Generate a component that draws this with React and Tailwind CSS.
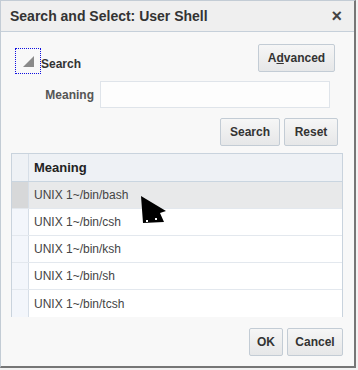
const rows = [
  "UNIX 1~/bin/bash",
  "UNIX 1~/bin/csh",
  "UNIX 1~/bin/ksh",
  "UNIX 1~/bin/sh",
  "UNIX 1~/bin/tcsh",
];

const btn =
  "h-[28px] flex items-center justify-center rounded-[2px] border border-[#c3ccd5] bg-gradient-to-b from-[#f6f6f6] to-[#e6e7e8] text-[12px] font-bold text-[#333]";

const App = () => {
  return (
    <div className="w-[358px] h-[370px] bg-[#f2f2f2] font-['Liberation_Sans',Arial,sans-serif]">
      <div className="relative w-[356px] h-[368px] flex flex-col bg-[#f8f8f8] border-l border-t border-[#c3ccd5] border-r-2 border-b-2 border-r-[#767676] border-b-[#767676]">
        {/* Title bar */}
        <div className="h-[31px] shrink-0 flex items-center justify-between pl-[9px] pr-[12px] bg-[#efefef] border-b border-[#c6d0da]">
          <span className="text-[14px] font-bold text-[#333]">Search and Select: User Shell</span>
          <span className="text-[18px] font-bold text-[#444] leading-none">×</span>
        </div>

        {/* Search header + Advanced */}
        <div className="h-[49px] shrink-0 flex items-start">
          <div className="ml-[14px] mt-[16px] w-[26px] h-[26px] border border-dotted border-[#1010e0] flex items-center justify-center">
            <svg width="11" height="11" viewBox="0 0 11 11">
              <polygon points="11,0 11,11 0,11" fill="#8a8a8a" />
            </svg>
          </div>
          <span className="mt-[23px] text-[12px] font-bold text-[#333]">Search</span>
          <button className={`${btn} ml-auto mr-[19px] mt-[12px] w-[77px]`}>
            A<span className="underline">d</span>vanced
          </button>
        </div>

        {/* Meaning field */}
        <div className="h-[27px] shrink-0 flex items-center">
          <span className="w-[93px] text-right text-[12px] font-bold text-[#555]">Meaning</span>
          <div className="ml-[6px] w-[230px] h-[27px] bg-[#fdfdfd] border border-[#dfe4ea]" />
        </div>

        {/* Search / Reset */}
        <div className="mt-[10px] shrink-0 flex justify-end gap-[4px] pr-[16px]">
          <button className={`${btn} w-[60px]`}>Search</button>
          <button className={`${btn} w-[54px]`}>Reset</button>
        </div>

        {/* Results table */}
        <div className="mt-[7px] ml-[10px] w-[332px] h-[164px] shrink-0 border border-[#c9d3dd] bg-white flex flex-col">
          <div className="h-[28px] shrink-0 flex bg-[#eef1f5] border-b border-[#c9d5e0]">
            <div className="w-[17px] border-r border-[#d6dee7]" />
            <div className="flex-1 flex items-center pl-[5px] text-[13px] font-bold text-[#222]">Meaning</div>
          </div>
          {rows.map((r, i) => (
            <div
              key={r}
              className={`h-[27px] shrink-0 flex ${i < rows.length - 1 ? "border-b border-[#e3e8ee]" : ""} ${i === 0 ? "bg-[#e8e9ea]" : "bg-white"}`}
            >
              <div className={`w-[17px] border-r border-[#d6dee7] ${i === 0 ? "bg-[#d7d8d9]" : "bg-[#f3f6fb]"}`} />
              <div className="flex-1 flex items-center pl-[5px] text-[12px] text-[#444]">{r}</div>
            </div>
          ))}
        </div>

        {/* Footer */}
        <div className="mt-[11px] shrink-0 flex justify-end gap-[4px] pr-[11px]">
          <button className={`${btn} w-[34px]`}>OK</button>
          <button className={`${btn} w-[56px]`}>Cancel</button>
        </div>

        {/* mouse pointer */}
        <svg className="absolute left-[139px] top-[194px]" width="27" height="30" viewBox="0 0 27 30">
          <polygon points="1,1 26,16 20,18 24,27 3,28" fill="#000" />
          <rect x="21" y="18" width="2" height="2" fill="#fff" />
          <rect x="6" y="25" width="2" height="2" fill="#fff" />
          <rect x="15" y="23" width="2" height="2" fill="#fff" />
        </svg>
      </div>
    </div>
  );
};

export default App;
